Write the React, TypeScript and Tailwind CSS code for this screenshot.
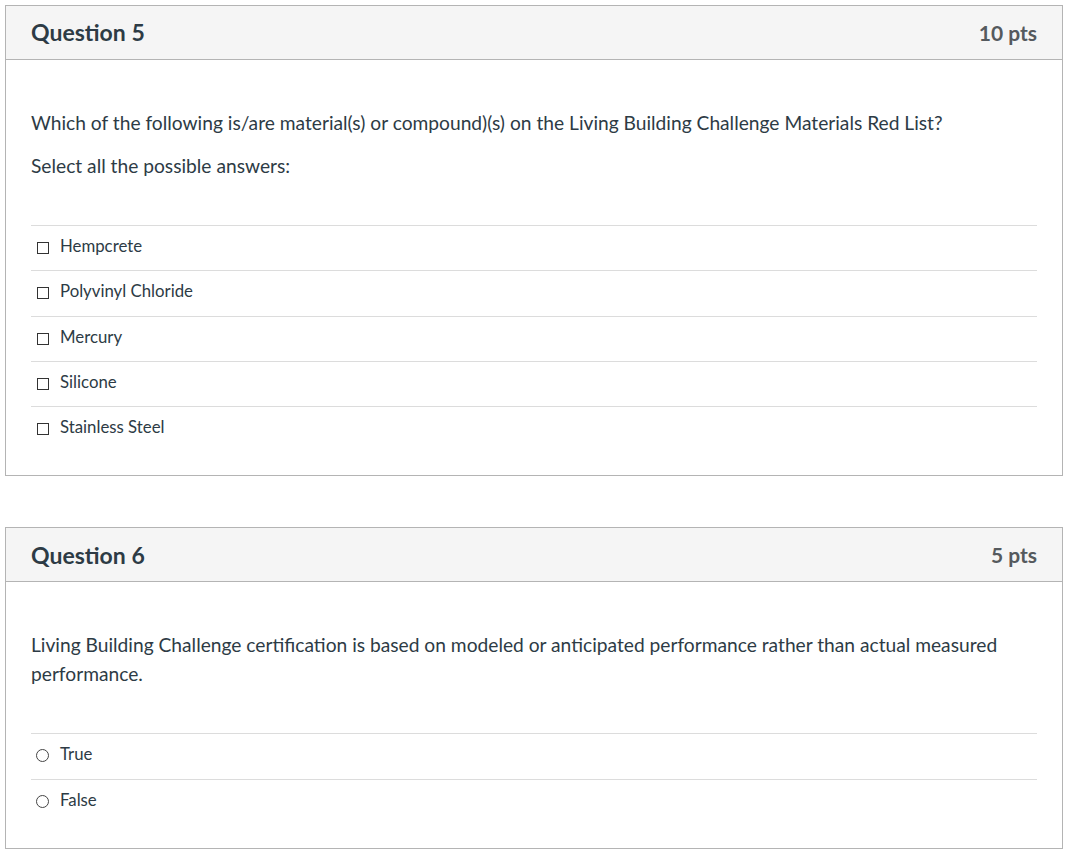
import React from 'react';

interface QuestionProps {
  number: number;
  points: string;
  paragraphs: string[];
  answers: string[];
  kind: 'checkbox' | 'radio';
}

function QuestionCard({ number, points, paragraphs, answers, kind }: QuestionProps) {
  return (
    <div className="w-[1058px] border border-[#b4b4b4] bg-white">
      {/* header */}
      <div className="h-[54px] flex items-center justify-between px-[25px] bg-[#f5f5f5] border-b border-[#b4b4b4]">
        <h2 className="text-[23px] font-bold text-[#2d3b45]">Question {number}</h2>
        <span className="text-[21px] font-bold text-[#555a5e]">{points}</span>
      </div>

      {/* body */}
      <div className="px-[25px] pt-[48px] pb-[24px]">
        <div className="flex flex-col gap-[14px] text-[19.2px] leading-[29px] text-[#2d3b45]">
          {paragraphs.map((p) => (
            <p key={p}>{p}</p>
          ))}
        </div>

        <div className="mt-[45px]">
          {answers.map((a) => (
            <div key={a} className="h-[45.3px] flex items-start pt-[10px] border-t border-[#dcdcdc] text-[16.8px] leading-[20px] text-[#2d3b45]">
              {kind === 'checkbox' ? (
                <span className="mt-[6px] ml-[6px] mr-[11px] w-[12px] h-[12px] border border-[#333] bg-white" />
              ) : (
                <span className="mt-[5px] ml-[5px] mr-[11px] w-[13px] h-[13px] rounded-full border border-[#444] bg-white" />
              )}
              <span>{a}</span>
            </div>
          ))}
        </div>
      </div>
    </div>
  );
}

export default function App() {
  return (
    <div className="min-h-screen bg-white pt-[5px] pl-[5px] flex flex-col gap-[51px]" style={{ fontFamily: 'Lato, "Open Sans", sans-serif' }}>
      <QuestionCard
        number={5}
        points="10 pts"
        kind="checkbox"
        paragraphs={[
          'Which of the following is/are material(s) or compound)(s) on the Living Building Challenge Materials Red List?',
          'Select all the possible answers:',
        ]}
        answers={['Hempcrete', 'Polyvinyl Chloride', 'Mercury', 'Silicone', 'Stainless Steel']}
      />
      <QuestionCard
        number={6}
        points="5 pts"
        kind="radio"
        paragraphs={[
          'Living Building Challenge certification is based on modeled or anticipated performance rather than actual measured performance.',
        ]}
        answers={['True', 'False']}
      />
    </div>
  );
}
